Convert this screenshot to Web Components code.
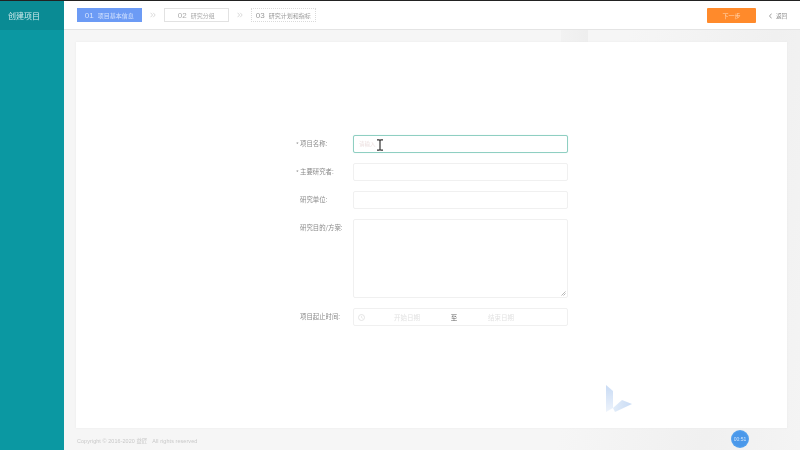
<!DOCTYPE html>
<html lang="zh"><head><meta charset="utf-8"><style>
html,body{margin:0;height:100%;overflow:hidden;background:#f5f5f5;font-family:"Noto Sans CJK SC","Liberation Sans",sans-serif}
</style></head><body>
<app-shell>
  <side-bar slot="side">创建项目</side-bar>
  <top-bar slot="top">
    <step-chip active num="01">项目基本信息</step-chip>
    <step-arrow></step-arrow>
    <step-chip num="02">研究分组</step-chip>
    <step-arrow></step-arrow>
    <step-chip num="03" dashed>研究计划和指标</step-chip>
  </top-bar>
  <form-card>
    <form-row req label="项目名称:"><text-box focus placeholder="请输入"></text-box></form-row>
    <form-row req label="主要研究者:"><text-box></text-box></form-row>
    <form-row label="研究单位:"><text-box></text-box></form-row>
    <form-row label="研究目的/方案:"><text-box area></text-box></form-row>
    <form-row label="项目起止时间:"><date-range></date-range></form-row>
  </form-card>
  <page-foot>Copyright © 2016-2020 益匠&nbsp;&nbsp;&nbsp;All rights reserved</page-foot>
</app-shell>
<script>
function def(name,html,init){customElements.define(name,class extends HTMLElement{
  constructor(){super();this.attachShadow({mode:'open'}).innerHTML=html;}
  connectedCallback(){init&&init(this,this.shadowRoot);}
});}
def('app-shell',`<style>
:host{display:grid;grid-template-columns:64px 1fr;height:450px;width:800px;position:relative;overflow:hidden;background:#f5f5f5;filter:blur(.35px)}
.top{position:absolute;left:0;top:0;right:0;height:1px;background:#222;z-index:3}
.main{display:flex;flex-direction:column;min-width:0;position:relative;
 background:linear-gradient(100deg,#f6f6f6 0 70%,#f0f0f0 88%,#f4f4f4 100%)}
.content{flex:1;display:flex;flex-direction:column;padding:12px 13px 0 12px;min-height:0}
.deco{position:absolute;left:497px;top:30px;width:27px;height:12px;background:linear-gradient(90deg,#f2f2f2,#eeeeee)}
.cursor{position:absolute;left:376px;top:139px;z-index:2}
.timer{position:absolute;left:731px;top:430px;width:18px;height:18px;border-radius:50%;background:radial-gradient(circle,#4a98ea 55%,#74bcf8 100%);color:#cfe4fb;font:5px "Liberation Sans",sans-serif;display:flex;align-items:center;justify-content:center;z-index:2}
</style>
<div class="top"></div>
<slot name="side"></slot>
<div class="main"><slot name="top"></slot><div class="deco"></div><div class="content"><slot></slot></div></div>
<svg class="cursor" width="8" height="12" viewBox="0 0 8 12"><path d="M1 .8h2.2L4 1.6 4.8.8H7M4 1.6v8.8M1 11.2h2.2l.8-.8.8.8H7" fill="none" stroke="#333" stroke-width="1.2"/></svg>
<div class="timer">00:51</div>`);
def('side-bar',`<style>
:host{display:block;background:#0b98a2;color:#cfeaec;font-size:8px}
.h{height:30px;background:#0a8b94;display:flex;align-items:center;padding:0 0 0 8px;box-sizing:border-box}
</style><div class="h"><slot></slot></div>`);
def('top-bar',`<style>
:host{display:block;background:#fff;height:30px;box-sizing:border-box;border-bottom:1px solid #e4e4e4;position:relative;z-index:1}
.b{display:flex;align-items:flex-start;height:100%;padding:8px 13px 0 13px;box-sizing:border-box}
.steps{display:flex;align-items:center}
.next{margin-left:auto;width:49px;height:15px;background:#ff8a2b;color:#ffd9b8;font-size:6px;display:flex;align-items:center;justify-content:center;border-radius:1px}
.back{margin-left:13px;height:15px;display:flex;align-items:center;gap:4px;color:#888;font-size:5.5px}
.back svg{display:block}
</style><div class="b"><div class="steps"><slot></slot></div>
<div class="next">下一步</div>
<div class="back"><svg width="3" height="6" viewBox="0 0 3 6"><path d="M2.6.6.5 3l2.1 2.4" fill="none" stroke="#777" stroke-width=".7"/></svg><span>返回</span></div></div>`);
def('step-chip',`<style>
:host{display:flex;box-sizing:border-box;width:64.5px;height:14px;align-items:center;justify-content:center;gap:4px;border:1px solid #e2e2e2;color:#aaa;font-size:6px;background:#fff;white-space:nowrap}
:host([active]){background:#6c9bf5;border-color:#6c9bf5;color:#d5e3fd}
:host([dashed]){border:1px dotted #dadada;color:#999}
.n{font:8px "Liberation Sans",sans-serif}
</style><span class="n"></span><slot></slot>`,(e,s)=>{s.querySelector('.n').textContent=e.getAttribute('num')});
def('step-arrow',`<style>:host{display:flex;width:22.5px;justify-content:center}svg{display:block}</style>
<svg width="6" height="6" viewBox="0 0 6 6"><path d="M.6.8 2.6 3 .6 5.2M3.2.8 5.2 3 3.2 5.2" fill="none" stroke="#d0d0d0" stroke-width=".8"/></svg>`);
def('form-card',`<style>
:host{display:block;height:386px;background:#fff;box-shadow:0 0 2px #e8e8e8;position:relative;box-sizing:border-box}
.f{display:flex;flex-direction:column;gap:10px;padding:93px 0 0 0}
.logo{position:absolute;left:529px;top:343px;opacity:.8}
</style><div class="f"><slot></slot></div>
<svg class="logo" width="32" height="30" viewBox="0 0 32 30"><defs><linearGradient id="g" x1="0" y1="0" x2="0" y2="1"><stop offset="0" stop-color="#bcd3f3"/><stop offset="1" stop-color="#eaf1fb"/></linearGradient><linearGradient id="h" x1="0" y1="0" x2="1" y2="0"><stop offset="0" stop-color="#dbe8f8"/><stop offset="1" stop-color="#bcd3f3"/></linearGradient></defs>
<path d="M1 0 8 6V23L1 27Z" fill="url(#g)"/><path d="M8 23 17 15 27 19 10 27Z" fill="url(#h)"/></svg>`);
def('form-row',`<style>
:host{display:flex;align-items:flex-start;padding-left:219px}
.l{width:58px;flex:none;height:17px;display:flex;align-items:center;color:#8a8a8a;font-size:6.4px;white-space:nowrap;position:relative;padding-left:5px;box-sizing:border-box}
:host([req]) .l::before{content:"*";position:absolute;left:1px;top:5px;color:#999;font-size:6px}
.c{width:215px}
</style><div class="l"></div><div class="c"><slot></slot></div>`,(e,s)=>{s.querySelector('.l').textContent=e.getAttribute('label')});
def('text-box',`<style>
:host{display:block;box-sizing:border-box;height:18px;border:1px solid #f0f0f0;border-radius:2px;background:#fff;color:#ecdfdf;font-size:5.5px;padding:0 5px;line-height:16px}
:host([focus]){border-color:#8fcfc2;box-shadow:0 0 1px #c4e6df}
:host([area]){height:79px;position:relative}
svg{position:absolute;right:1px;bottom:1px;display:none}
:host([area]) svg{display:block}
</style><span></span><svg width="5" height="5" viewBox="0 0 5 5"><path d="M.5 4.5 4.5.5M2.5 4.5l2-2" stroke="#888" stroke-width=".6"/></svg>`,(e,s)=>{s.querySelector('span').textContent=e.getAttribute('placeholder')||''});
def('date-range',`<style>
:host{display:flex;box-sizing:border-box;height:18px;border:1px solid #f0f0f0;border-radius:2px;align-items:center;font-size:6.5px;color:#e2e2e2;padding:0 24px 0 4px;background:#fff}
svg{flex:none}
.t{flex:1;text-align:center}
.z{color:#666;flex:none;width:10px;text-align:center}
</style><svg width="7" height="7" viewBox="0 0 7 7"><circle cx="3.5" cy="3.5" r="3" fill="none" stroke="#ddd" stroke-width=".8"/><path d="M3.5 1.8V3.6L4.8 4.3" fill="none" stroke="#ddd" stroke-width=".6"/></svg>
<span class="t">开始日期</span><span class="z">至</span><span class="t">结束日期</span>`);
def('page-foot',`<style>
:host{display:block;height:22px;line-height:26px;color:#c8c8c8;font-size:5.4px;letter-spacing:.1px;padding-left:1px;font-family:"Liberation Sans","Noto Sans CJK SC",sans-serif}
</style><slot></slot>`);
</script></body></html>
